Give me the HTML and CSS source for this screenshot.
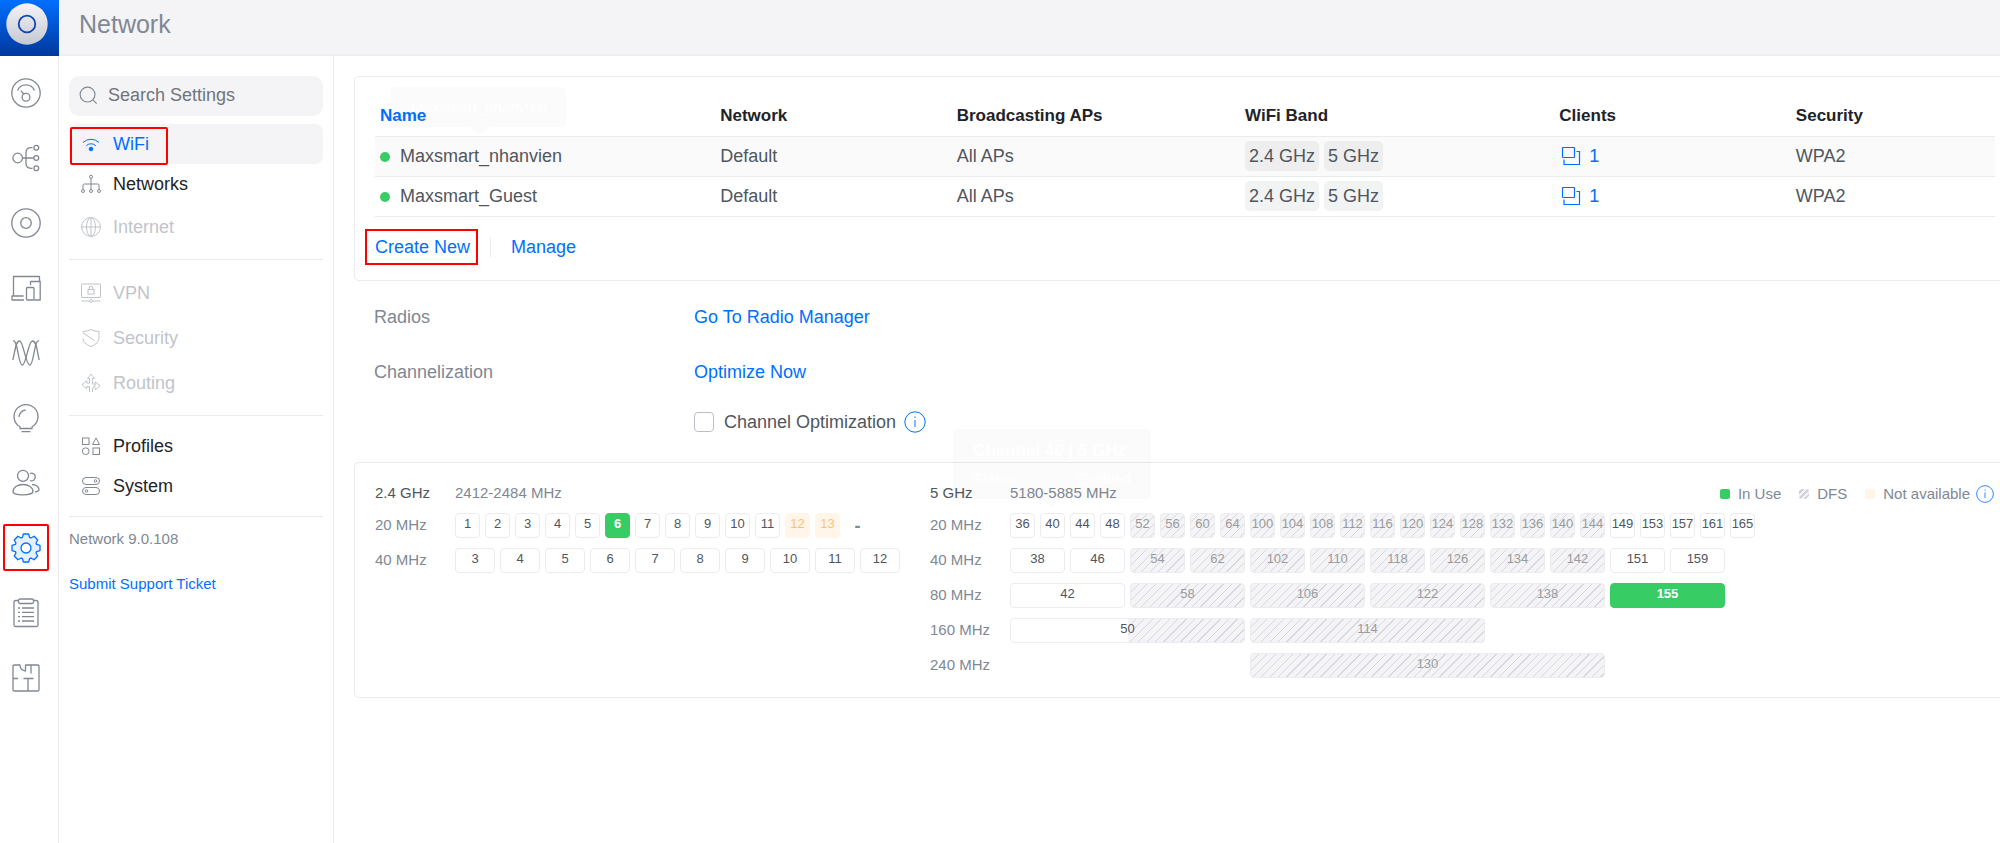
FILE: index.html
```html
<!DOCTYPE html>
<html lang="en">
<head>
<meta charset="utf-8">
<title>Network</title>
<link rel="stylesheet" href="styles.css">
</head>
<body>
<div class="app">
  <nav class="rail" aria-label="Applications">
    <a class="logo" href="#" aria-label="Home">
      <svg width="42" height="42" viewBox="0 0 42 42"><defs><linearGradient id="disc" x1="0" y1="0" x2="0" y2="1"><stop offset="0" stop-color="#f4f4f6"/><stop offset="1" stop-color="#c6c8d2"/></linearGradient></defs><circle cx="21" cy="21" r="20.7" fill="url(#disc)"/><circle cx="21" cy="21" r="8.3" fill="none" stroke="#0b45b5" stroke-width="1.8"/></svg>
    </a>
    <div class="rail-list">
      <a class="rail-item" href="#" aria-label="Dashboard"><svg viewBox="0 0 30 30"><circle cx="15" cy="15" r="14.2"/><path d="M6.5 12.500a9.200 9.200 0 0 1 17 0M9.800 12.600l3.200 3.700"/><circle cx="15" cy="19.200" r="3.900"/></svg></a>
      <a class="rail-item" href="#" aria-label="Topology"><svg viewBox="0 0 30 30"><circle cx="6.700" cy="15" r="4.800"/><circle cx="25.300" cy="4.700" r="2.400"/><circle cx="25.300" cy="15" r="2.400"/><circle cx="25.300" cy="25.300" r="2.400"/><path d="M11.500 15h11.400M21.500 4.700h-1.500q-5 0-5 5v10.600q0 5 5 5h1.500"/></svg></a>
      <a class="rail-item" href="#" aria-label="Devices"><svg viewBox="0 0 30 30"><circle cx="15" cy="15" r="14.200"/><circle cx="15" cy="15" r="5.300"/></svg></a>
      <a class="rail-item" href="#" aria-label="Clients"><svg viewBox="0 0 30 30"><path d="M2.500 23V3.500h26v4.300M12.500 23H1v4h12M19.500 12V8.500h9.700V27h-6"/><rect x="15.500" y="14.500" width="7.500" height="12.500" rx="1"/></svg></a>
      <a class="rail-item" href="#" aria-label="Radios"><svg viewBox="0 0 30 30"><path d="M1.800 3C7 .500 7 27 11.200 27S17 3 21.500 3 26 14 28.200 22"/><path d="M1.800 22C4 14 4.500 3 8.500 3S14.500 27 18.800 27 23 .500 28.200 3"/></svg></a>
      <a class="rail-item" href="#" aria-label="Insights"><svg viewBox="0 0 30 30"><path d="M9 25.500v-1.200q0-.8-2.200-2a12 12 0 1 1 16.400 0q-2.200 1.200-2.200 2v1.200zM10.500 28.700h9M8 14a7.200 7.200 0 0 1 6.600-7"/></svg></a>
      <a class="rail-item" href="#" aria-label="Users"><svg viewBox="0 0 30 30"><circle cx="12" cy="7.800" r="5.500"/><path d="M2 23.500c0-4 4.500-7 10-7s10 3 10 7-20 5-20 0zM19 5.500a3.800 3.800 0 1 1 0 7M21 16.500c4 0 7 2.500 7 5q0 2-4 2.300"/></svg></a>
      <a class="rail-item active" href="#" aria-label="Settings" aria-current="page"><svg viewBox="0 0 30 30"><path class="tint" d="M11.400 4.400L12.400 1h5.200l1 3.400 1.350.56 3.110-1.700 3.680 3.680-1.700 3.110.56 1.350 3.400 1v5.200l-3.400 1-.56 1.350 1.700 3.110-3.680 3.680-3.110-1.700-1.350.56-1 3.400h-5.200l-1-3.400-1.350-.56-3.110 1.700-3.680-3.680 1.700-3.110-.56-1.350-3.400-1v-5.200l3.400-1 .56-1.350-1.700-3.110 3.680-3.680 3.110 1.700z"/><circle cx="15" cy="15" r="5" fill="#fff"/></svg></a>
      <a class="rail-item" href="#" aria-label="Logs"><svg viewBox="0 0 30 30"><path d="M7.500 2.500h-3q-1.500 0-1.500 1.500v23q0 1.500 1.500 1.500h21q1.500 0 1.500-1.500V4q0-1.500-1.500-1.500h-3"/><rect x="7.500" y="1" width="15" height="4.500" rx="1.500"/><path d="M11 10h12M11 14.300h12M11 18.700h12M11 23h12M7 10h2M7 14.300h2M7 18.700h2M7 23h2"/></svg></a>
      <a class="rail-item" href="#" aria-label="Floor plan"><svg viewBox="0 0 30 30"><path d="M9 2H3.300Q2 2 2 3.300v23.400Q2 28 3.300 28h23.400q1.300 0 1.300-1.300V3.300Q28 2 26.700 2H14.500v6Q9 7 9 2zM20 2v8.500M2 15.500h5M12.500 15.500h10M17 15.500V28"/></svg></a>
    </div>
  </nav>
  <div class="page">
    <header class="topbar"><h1>Network</h1></header>
    <div class="columns">
      <aside class="sidebar">
        <label class="search">
          <svg viewBox="0 0 20 20"><circle cx="9" cy="9" r="7.800"/><path d="M14.600 14.600l4 4"/></svg>
          <input type="text" placeholder="Search Settings" aria-label="Search Settings">
        </label>
        <nav class="menu">
          <a class="selected" href="#"><svg viewBox="0 0 20 20"><path d="M2 8.500a11.500 11.500 0 0 1 16 0M5.200 11.700a7 7 0 0 1 9.600 0"/><circle class="dot" cx="10" cy="15" r="1.800"/></svg>WiFi</a>
          <a href="#"><svg viewBox="0 0 20 20"><path d="M10 4v12M2 15.500v-4.300q0-1.200 1.200-1.200h13.600q1.200 0 1.200 1.200v4.300"/><g fill="#fff"><circle cx="10" cy="2.800" r="1.500"/><circle cx="2" cy="17" r="1.500"/><circle cx="10" cy="17" r="1.500"/><circle cx="18" cy="17" r="1.500"/></g></svg>Networks</a>
          <a class="tall off" href="#"><svg viewBox="0 0 20 20"><circle cx="10" cy="10" r="9.400"/><ellipse cx="10" cy="10" rx="4.500" ry="9.400"/><path d="M10 .6v18.800M.6 10h18.800"/></svg>Internet</a>
        </nav>
        <nav class="menu">
          <a class="tall off" href="#"><svg viewBox="0 0 20 20"><rect x=".5" y="1" width="19" height="13.500" rx=".5"/><rect x="7" y="6.500" width="6" height="4.500"/><path d="M8.300 6.500V5a1.700 1.700 0 0 1 3.400 0v1.500M.5 18h7.500M12 18h7.500"/><circle cx="10" cy="18" r="1.500"/></svg>VPN</a>
          <a class="tall off" href="#"><svg viewBox="0 0 20 20"><path d="M10 1.500q4 2 8 2v6q0 6-8 9-8-3-8-8M2 4.500v-1q4 0 8-2M2 5l11.500 7.500"/></svg>Security</a>
          <a class="tall off" href="#"><svg viewBox="0 0 20 20"><path d="M8.500 19v-5.500H5.800v2.300L1 11.700l4.800-4v2.400h2.700V5.500H6.600L10 1l3.400 4.500h-2v5.600M11.500 19v-3q0-2.600 2.600-2.600v-2.300H11.500M14.100 11.100V8.700l4.900 4-4.900 4v-2.300"/></svg>Routing</a>
        </nav>
        <nav class="menu">
          <a href="#"><svg viewBox="0 0 20 20"><rect x="1.500" y="2" width="6.500" height="6.500"/><path d="M15 2l3.500 6.500h-7z"/><circle cx="4.700" cy="15.200" r="3.400"/><rect x="12" y="12" width="6.500" height="6.500"/></svg>Profiles</a>
          <a href="#"><svg viewBox="0 0 20 20"><rect x="1.500" y="1.500" width="17" height="7" rx="3.500"/><circle cx="14.500" cy="5" r="1.300"/><rect x="1.500" y="11.500" width="17" height="7" rx="3.500"/><circle cx="5.500" cy="15" r="1.300"/></svg>System</a>
        </nav>
        <div class="about"><span>Network 9.0.108</span><a href="#">Submit Support Ticket</a></div>
      </aside>
      <main class="main">
        <section class="card networks">
          <table>
            <colgroup><col class="c-name"><col class="c-net"><col class="c-aps"><col class="c-band"><col class="c-clients"><col class="c-sec"></colgroup>
            <thead><tr><th class="sorted">Name</th><th>Network</th><th>Broadcasting APs</th><th>WiFi Band</th><th>Clients</th><th>Security</th></tr></thead>
            <tbody>
              <tr class="hover"><td><span class="status"></span>Maxsmart_nhanvien</td><td>Default</td><td>All APs</td><td><span class="badge">2.4 GHz</span><span class="badge">5 GHz</span></td><td><a class="clients" href="#"><svg viewBox="0 0 20 20"><rect x="1.500" y="1.500" width="12" height="10" rx=".5"/><path d="M15.500 5.500h3v13h-15.500v-5"/></svg>1</a></td><td>WPA2</td></tr>
              <tr><td><span class="status"></span>Maxsmart_Guest</td><td>Default</td><td>All APs</td><td><span class="badge">2.4 GHz</span><span class="badge">5 GHz</span></td><td><a class="clients" href="#"><svg viewBox="0 0 20 20"><rect x="1.500" y="1.500" width="12" height="10" rx=".5"/><path d="M15.500 5.500h3v13h-15.500v-5"/></svg>1</a></td><td>WPA2</td></tr>
            </tbody>
          </table>
          <div class="actions"><button class="create" type="button">Create New</button><button class="manage" type="button">Manage</button></div>
          <div class="tip tip-name" role="tooltip">Maxsmart_nhanvien</div>
        </section>
        <section class="options">
          <div class="option"><span>Radios</span><a href="#">Go To Radio Manager</a></div>
          <div class="option"><span>Channelization</span><a href="#">Optimize Now</a></div>
          <div class="option short"><span></span><label class="check"><input type="checkbox">Channel Optimization<svg class="info" viewBox="0 0 22 22"><circle cx="11" cy="11" r="10.200"/><path d="M11 9v7M11 5.500v1.500"/></svg></label></div>
        </section>
        <section class="card channels">
          <div class="band">
            <div class="line head"><b>2.4 GHz</b><span>2412-2484 MHz</span></div>
            <div class="line"><span>20 MHz</span><div class="cells"><i>1</i><i>2</i><i>3</i><i>4</i><i>5</i><i class="use">6</i><i>7</i><i>8</i><i>9</i><i>10</i><i>11</i><i class="na">12</i><i class="na">13</i><i class="none">-</i></div></div>
            <div class="line"><span>40 MHz</span><div class="cells w1"><i>3</i><i>4</i><i>5</i><i>6</i><i>7</i><i>8</i><i>9</i><i>10</i><i>11</i><i>12</i></div></div>
          </div>
          <div class="band wide">
            <div class="line head"><b>5 GHz</b><span>5180-5885 MHz</span>
              <div class="legend"><span class="key use">In Use</span><span class="key dfs">DFS</span><span class="key na">Not available</span><svg class="info" viewBox="0 0 22 22"><circle cx="11" cy="11" r="10.200"/><path d="M11 9v7M11 5.500v1.500"/></svg></div>
            </div>
            <div class="line"><span>20 MHz</span><div class="cells"><i>36</i><i>40</i><i>44</i><i>48</i><i class="dfs">52</i><i class="dfs">56</i><i class="dfs">60</i><i class="dfs">64</i><i class="dfs">100</i><i class="dfs">104</i><i class="dfs">108</i><i class="dfs">112</i><i class="dfs">116</i><i class="dfs">120</i><i class="dfs">124</i><i class="dfs">128</i><i class="dfs">132</i><i class="dfs">136</i><i class="dfs">140</i><i class="dfs">144</i><i>149</i><i>153</i><i>157</i><i>161</i><i>165</i></div></div>
            <div class="line"><span>40 MHz</span><div class="cells w2"><i>38</i><i>46</i><i class="dfs">54</i><i class="dfs">62</i><i class="dfs">102</i><i class="dfs">110</i><i class="dfs">118</i><i class="dfs">126</i><i class="dfs">134</i><i class="dfs">142</i><i>151</i><i>159</i></div></div>
            <div class="line"><span>80 MHz</span><div class="cells w4"><i>42</i><i class="dfs">58</i><i class="dfs">106</i><i class="dfs">122</i><i class="dfs">138</i><i class="use">155</i></div></div>
            <div class="line"><span>160 MHz</span><div class="cells w8"><i class="half">50</i><i class="dfs">114</i></div></div>
            <div class="line"><span>240 MHz</span><div class="cells w12"><i class="dfs">130</i></div></div>
          </div>
          <div class="tip tip-channel" role="tooltip"><b>Channel 40 | 5 GHz</b><span>Status<span>Enabled</span></span></div>
        </section>
      </main>
    </div>
  </div>
</div>
</body>
</html>
```
FILE: styles.css
```css
* { box-sizing: border-box; }
body {
  margin: 0;
  background: #fff;
  color: #50565e;
  font: 18px/20px "Liberation Sans", Arial, sans-serif;
}
a { color: #006fff; text-decoration: none; }
svg { fill: none; stroke: currentColor; flex: none; }
button { padding: 0; border: 0; background: none; color: #006fff; font: inherit; }
.app { display: flex; min-height: 100vh; }

/* Icon rail */
.rail { flex: none; width: 59px; border-right: 1px solid #eaebed; }
.logo {
  display: flex;
  align-items: center;
  height: 56px;
  margin-right: -1px;
  padding: 0 0 8px 6px;
  background: linear-gradient(#006fff, #00389c);
}
.logo svg { stroke: none; }
.rail-list { display: flex; flex-direction: column; align-items: center; padding: 4px 6px 0 0; }
.rail-item { display: flex; align-items: center; justify-content: center; width: 46px; height: 65px; color: #808893; }
.rail-item svg { width: 30px; height: 30px; stroke-width: 1.3; stroke-linejoin: round; }
.rail-item.active { height: 47px; margin: 9px 0; border: 2px solid #f00; border-radius: 2px; color: #006fff; }
.tint { fill: #e4f1fd; }

.page { flex: 1; min-width: 0; display: flex; flex-direction: column; }
.topbar {
  display: flex;
  align-items: center;
  height: 56px;
  padding: 0 20px 6px;
  background: #f4f4f6;
  border-bottom: 2px solid #eeeeef;
}
.topbar h1 { margin: 0; color: #808893; font-size: 25px; font-weight: 400; line-height: 30px; }
.columns { flex: 1; display: flex; }

/* Settings menu */
.sidebar { flex: none; width: 275px; padding: 20px 10px; border-right: 1px solid #eaebed; }
.search { display: flex; align-items: center; gap: 10px; height: 40px; margin-bottom: 8px; padding: 0 10px 2px; border-radius: 10px; background: #f4f4f6; color: #808893; }
.search svg { width: 19px; height: 19px; stroke-width: 1.2; }
.search input { flex: 1; min-width: 0; padding: 0; border: 0; background: none; font: inherit; outline: 0; }
.search input::placeholder { color: #70747b; opacity: 1; }
.menu { padding-bottom: 10px; margin-bottom: 10px; border-bottom: 1px solid #eaebed; }
.menu a { position: relative; display: flex; align-items: center; gap: 12px; height: 40px; padding-left: 12px; border-radius: 8px; color: #212327; }
.menu a.tall { height: 45px; }
.menu svg { width: 20px; height: 20px; color: #808893; }
.menu a.off, .menu a.off svg { color: #bfc4cb; }
.menu a.selected { background: #f4f4f6; color: #006fff; }
.menu a.selected svg { color: inherit; }
.menu a.selected::after { content: ""; position: absolute; left: 1px; top: 3px; width: 94px; height: 34px; border: 2px solid #f00; border-radius: 2px; }
.dot { fill: currentColor; }
.about { display: flex; flex-direction: column; gap: 25px; padding-top: 2px; color: #808893; font-size: 15px; }

/* Main column */
.main { flex: 1; min-width: 0; padding: 20px 0 20px 20px; }
.card { position: relative; border: 1px solid #eaebed; border-right: 0; border-radius: 5px 0 0 5px; }
.networks { padding: 19px 5px 23px 20px; }
table { width: 100%; table-layout: fixed; border-collapse: collapse; }
.c-name { width: 21%; }
.c-net { width: 14.6%; }
.c-aps { width: 17.8%; }
.c-band { width: 19.4%; }
.c-clients { width: 14.6%; }
th, td { height: 40px; padding: 0 5px; border-bottom: 1px solid #eaebed; text-align: left; white-space: nowrap; }
th { color: #212327; font-size: 17px; }
th.sorted { color: #006fff; }
tr.hover { background: #fafafa; }
.status { display: inline-block; width: 10px; height: 10px; margin-right: 10px; border-radius: 50%; background: #38cc65; }
.badge { display: inline-block; margin-right: 5px; padding: 5px 4px; border-radius: 5px; background: #f2f4f4; }
.hover .badge { background: #eeeeef; }
.clients { display: flex; align-items: center; gap: 8px; }
.clients svg { width: 20px; height: 20px; margin-left: 2px; stroke-width: 1.2; }
.actions { display: flex; align-items: center; padding-top: 20px; }
.create { margin-left: -2px; padding-left: 2px; outline: 2px solid #f00; outline-offset: 6px; }
.manage { margin-left: 20px; padding-left: 20px; border-left: 1px solid #eaebed; }

.options { padding: 9px 0 17px 20px; }
.option { display: flex; align-items: center; height: 55px; color: #808893; }
.option.short { height: 45px; }
.option > span { width: 320px; }
.check { display: flex; align-items: center; color: #50565e; }
.check input { appearance: none; width: 20px; height: 20px; margin: 0 10px 0 0; border: 1px solid #b9bec7; border-radius: 4px; }
.info { width: 22px; height: 22px; margin-left: 8px; color: #006fff; }

/* Channel plan */
.channels { display: flex; padding: 20px 6px 19px 20px; color: #808893; font-size: 15px; }
.band { display: flex; flex-direction: column; gap: 10px; width: 555px; flex: none; }
.band.wide { flex: 1; }
.line { display: flex; align-items: center; height: 25px; white-space: nowrap; }
.line > :first-child { flex: none; width: 80px; }
.line.head { height: 20px; }
.line b { color: #50565e; font-weight: 400; }
.cells { display: flex; gap: 5px; }
.cells i {
  width: 25px;
  height: 25px;
  border: 1px solid #ececee;
  border-radius: 4px;
  background-origin: border-box;
  color: #50565e;
  font-size: 13px;
  font-style: normal;
  text-align: center;
  display: flex;
  justify-content: center;
}
.w1 i { width: 40px; }
.w2 i { width: 55px; }
.w4 i { width: 115px; }
.w8 i { width: 235px; }
.w12 { margin-left: 240px; }
.w12 i { width: 355px; }
.cells .dfs { color: #9b9b9d; }
.cells .dfs { background: repeating-linear-gradient(135deg, #f4f4f6 0 5px, #d6d7e1 5px 6px); }
.key.dfs::before { background: repeating-linear-gradient(135deg, #f4f4f6 0 2px, #d0d2da 2px 4px); }
.cells .half { background: repeating-linear-gradient(135deg, #f4f4f6 0 5px, #d6d7e1 5px 6px) right / 50% 100% no-repeat; }
.cells .use { border-color: #38cc65; background: #38cc65; color: #fff; font-weight: 700; }
.cells .na { border-color: #fff5e8; background: #fff5e8; color: #f9c27b; }
.cells .none { border-color: transparent; color: #808893; font-size: 18px; font-weight: 700; line-height: 24px; }
.legend { display: flex; align-items: center; gap: 18px; margin-left: auto; padding-top: 2px; }
.key { display: flex; align-items: center; gap: 8px; }
.key::before { content: ""; width: 10px; height: 10px; border-radius: 2px; }
.key.use::before { background: #38cc65; }
.key.na::before { background: #fff5e8; }
.legend .info { width: 18px; height: 18px; margin-left: -12px; }

/* Fading tooltips */
.tip { position: absolute; border-radius: 5px; background: rgba(33, 35, 39, .02); color: #fff; font-size: 15px; pointer-events: none; }
.tip::after { content: ""; position: absolute; top: 100%; left: 50%; margin-left: -10px; border: 10px solid transparent; border-bottom: 0; border-top: 8px solid rgba(33, 35, 39, .02); }
.tip-name { left: 36px; top: 10px; padding: 10px 20px; }
.tip-channel { left: 598px; top: -34px; width: 198px; padding: 12px 20px; height: 70px; display: flex; flex-direction: column; gap: 8px; }
.tip-channel b { font-size: 17px; white-space: nowrap; }
.tip-channel > span { display: flex; justify-content: space-between; }
```
